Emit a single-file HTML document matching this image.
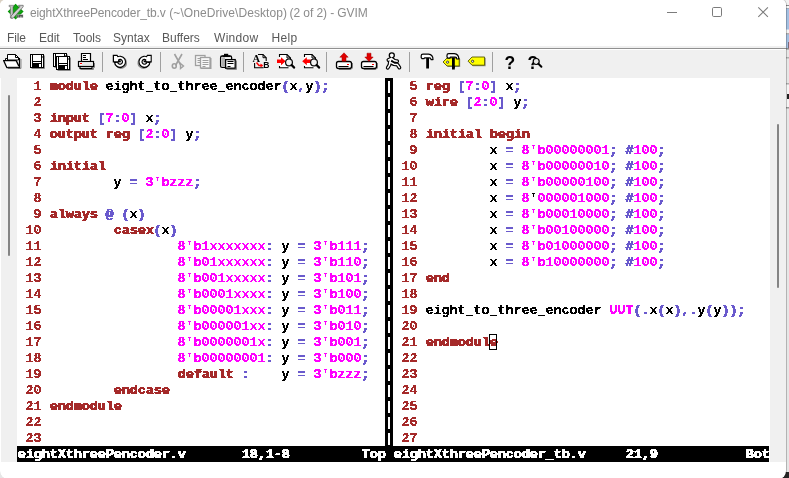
<!DOCTYPE html>
<html><head><meta charset="utf-8"><title>GVIM</title>
<style>
html,body{margin:0;padding:0;}
body{width:789px;height:478px;overflow:hidden;background:#e6e6e6;position:relative;font-family:"Liberation Sans",sans-serif;}
#bgright{position:absolute;left:786px;top:0;width:3px;height:478px;background:linear-gradient(to bottom,#f2f2f2 0,#f2f2f2 5px,#8c8c8c 5px,#8c8c8c 6px,#f6f6f6 6px,#f6f6f6 8px,#9a9a9a 8px,#a4c0e2 9px,#a4c0e2 29px,#f4f4f4 30px,#f4f4f4 33px,#b0b0b0 33px,#b0b0b0 34px,#a4c0e2 35px,#a4c0e2 48px,#8a8a8a 48px,#8a8a8a 49px,#e6e6e6 50px,#e6e6e6 57px,#b0b0b0 57px,#b0b0b0 58px,#e6e6e6 59px,#e6e6e6 83px,#b0b0b0 83px,#b0b0b0 84px,#f4f4f4 85px,#f4f4f4 107px,#999 107px,#999 108px,#e6e6e6 109px,#e6e6e6 472px,#262626 472px);}
#bgtl{position:absolute;left:0;top:0;width:6px;height:6px;background:#d9d0c2;}
#bgbl{position:absolute;left:0;top:466px;width:10px;height:12px;background:#e6e6e6;}
#bgbr{position:absolute;left:774px;top:472px;width:15px;height:6px;background:#262626;}
#glyph1{position:absolute;left:788px;top:42px;width:1px;height:6px;background:#7a6a7a;}
#glyph2{position:absolute;left:787px;top:94px;width:2px;height:5px;background:#222;}
#win{will-change:transform;position:absolute;left:0;top:0;width:786px;height:479px;background:#fff;border-right:1px solid rgba(0,0,0,0.22);background-clip:padding-box;border-radius:5px 5px 8px 8px;overflow:hidden;}
#title{position:absolute;left:0;top:0;width:786px;height:30px;background:#fff;}
#vimicon{position:absolute;left:7px;top:3px;}
.tt{position:absolute;top:5px;font-size:12px;color:#8c8c8c;white-space:pre;line-height:16px;}
#wctl{position:absolute;left:650px;top:0;}
#menu{position:absolute;left:0;top:28px;width:786px;height:18px;background:#fff;}
#menu span{position:absolute;top:2px;font-size:12px;color:#585858;line-height:16px;}
#tbline{position:absolute;left:0;top:48px;width:786px;height:1px;background:#909090;z-index:2;box-shadow:0 1px 0 #fff;}
#toolbar{position:absolute;left:0;top:46px;width:786px;height:32px;background:#f0f0f0;}
#lsb{position:absolute;left:1px;top:78px;width:16px;height:384px;background:#f0f0f0;}
#rsb{position:absolute;left:770px;top:78px;width:16px;height:384px;background:#f0f0f0;}
#lthumb{position:absolute;left:8px;top:95px;width:2px;height:161px;background:#858585;border-radius:1px;}
#rthumb{position:absolute;left:777px;top:124px;width:2px;height:164px;background:#858585;border-radius:1px;}
#text{position:absolute;left:17px;top:78px;width:753px;height:384px;background:#fff;font-family:"Liberation Mono",monospace;font-weight:bold;font-size:13.333px;line-height:16px;color:#000;}
.pane{position:absolute;top:0;}
#lp{left:0;width:368px;height:368px;overflow:hidden;}
#rp{left:376px;width:376px;height:368px;overflow:hidden;}
#sep{position:absolute;left:368px;top:0;width:8px;height:368px;background:#000;color:#fff;overflow:hidden;}
.ln{filter:url(#crisp);height:16px;white-space:pre;position:relative;top:1px;left:0.5px;}
#sep .ln{left:0;}
.l{color:#a52a2a}.k{color:#a52a2a;text-shadow:0.8px 0 0 #a52a2a}.n{color:#ff00ff}.q{color:#6a5acd}.s{color:#6a5acd;-webkit-text-stroke:0.35px #6a5acd}.t{color:#000}
#status{position:absolute;left:0;top:368px;width:752px;height:16px;background:#000;color:#fff;}
#status span{filter:url(#crisp);text-shadow:0.8px 0 0 #fff;position:absolute;top:1px;white-space:pre;margin-left:0.5px;}
#cursor{position:absolute;left:472px;top:256px;width:6px;height:14px;border:1px solid #000;box-sizing:content-box;}
.tsep{position:absolute;top:4px;width:1px;height:20px;background:#a0a0a0;}
.ic{position:absolute;top:5px;width:18px;height:18px;}

</style></head>
<body>
<svg width="0" height="0" style="position:absolute"><filter id="crisp" x="0" y="0" width="100%" height="100%" color-interpolation-filters="sRGB"><feComponentTransfer><feFuncA type="discrete" tableValues="0 1 1"/></feComponentTransfer></filter></svg>
<div id="bgright"></div><div id="bgtl"></div><div id="bgbl"></div><div id="bgbr"></div><div id="glyph1"></div><div id="glyph2"></div>
<div id="win">
 <div id="title"><svg id="vimicon" width="18" height="18" viewBox="7 3 18 18">
   <polygon points="15.6,3.8 23.6,11.6 15.6,19.4 7.7,11.6" fill="#0a960a"/>
   <polygon points="15.6,5.5 21.9,11.6 15.6,17.7 9.4,11.6" fill="#10a810"/>
   <polygon points="9,5.3 13.8,5.3 13.8,6.6 13,6.6 13,13 12.4,18 10.4,18 10.4,6.6 9,6.6" fill="#c4c4c4" stroke="#5a5a5a" stroke-width="0.5"/>
   <polygon points="18.6,5.3 23.2,5.3 23.2,6.8 13.2,18.2 11,18.2 11,16 20,6.6 18.6,6.6" fill="#cfcfcf" stroke="#4a4a4a" stroke-width="0.6"/>
   <rect x="16.6" y="14.4" width="6.6" height="3.2" fill="#a8a8a8"/>
   <rect x="17.4" y="15.2" width="1" height="2.2" fill="#333"/><rect x="19.2" y="15.2" width="3.4" height="1" fill="#444"/><rect x="19.2" y="15.2" width="0.9" height="2.2" fill="#444"/><rect x="21.7" y="15.2" width="0.9" height="2.2" fill="#444"/>
 </svg><span class="tt" style="left:30px;letter-spacing:-0.13px">eightXthreePencoder_tb.v</span><span class="tt" style="left:169.3px;letter-spacing:0.07px">(~\OneDrive\Desktop)</span><span class="tt" style="left:289.6px;letter-spacing:-0.09px">(2 of 2) - GVIM</span>
  <svg id="wctl" width="140" height="30" viewBox="650 0 140 30">
   <path d="M667 12.5h10" stroke="#7c7c7c" stroke-width="1" fill="none"/>
   <rect x="712.5" y="7.5" width="9" height="9" rx="1.2" fill="none" stroke="#7c7c7c" stroke-width="1"/>
   <path d="M758.3 7.3l9.6 9.6M767.9 7.3l-9.6 9.6" stroke="#7c7c7c" stroke-width="1.1" fill="none"/>
  </svg>
 </div>
 <div id="menu"><span style="left:7px;letter-spacing:-0.1px">File</span><span style="left:39px">Edit</span><span style="left:73px">Tools</span><span style="left:113px">Syntax</span><span style="left:162px">Buffers</span><span style="left:214px;letter-spacing:0.3px">Window</span><span style="left:271.5px;letter-spacing:0.3px">Help</span></div>
 <div id="tbline"></div>
 <div id="toolbar"><svg width="786" height="32" viewBox="0 46 786 32" style="position:absolute;left:0;top:0"><rect x="102" y="52" width="1" height="20" fill="#a0a0a0"/>
<rect x="160" y="52" width="1" height="20" fill="#a0a0a0"/>
<rect x="243" y="52" width="1" height="20" fill="#a0a0a0"/>
<rect x="326" y="52" width="1" height="20" fill="#a0a0a0"/>
<rect x="409" y="52" width="1" height="20" fill="#a0a0a0"/>
<rect x="492" y="52" width="1" height="20" fill="#a0a0a0"/>
<g>
<path d="M21 59v9.5h-13" stroke="#8a8a8a" stroke-width="1" fill="none"/>
<path d="M7.5 60V54.5h8l3 3V60z" fill="#fff" stroke="#000" stroke-width="1"/>
<path d="M15.5 54.5v3h3" fill="none" stroke="#000" stroke-width="1"/>
<path d="M5.5 60.5v-2h2" fill="none" stroke="#000" stroke-width="1"/>
<path d="M18 58.5h1.5v8.5" fill="none" stroke="#000" stroke-width="1.2"/>
<path d="M3.6 60.6h12.6l3.4 7h-12.8z" fill="#fff" stroke="#000" stroke-width="1.3" stroke-linejoin="round"/>
<path d="M7.5 66.6h11" stroke="#c8c8c8" stroke-width="1"/>
</g>
<g transform="translate(30,54)">
<path d="M14.5 1.5v13h-13" stroke="#8a8a8a" stroke-width="1" fill="none"/>
<rect x="0" y="0" width="14" height="14" fill="#000"/>
<rect x="1" y="1" width="12" height="12" fill="#fff"/>
<rect x="2" y="1" width="1" height="12" fill="#000"/>
<rect x="11" y="1" width="1" height="12" fill="#000"/>
<rect x="2" y="7" width="10" height="1" fill="#000"/>
<rect x="3" y="9" width="6" height="4" fill="#000"/>
<rect x="9" y="9" width="2" height="1" fill="#000"/>
<rect x="12" y="2.5" width="1" height="1" fill="#000"/>
</g>
<g transform="translate(53,53)">
<path d="M14.5 1.5v13h-13" stroke="#8a8a8a" stroke-width="1" fill="none"/>
<rect x="0" y="0" width="14" height="14" fill="#000"/>
<rect x="1" y="1" width="12" height="12" fill="#fff"/>
<rect x="2" y="1" width="1" height="12" fill="#000"/>
<rect x="11" y="1" width="1" height="12" fill="#000"/>
<rect x="2" y="7" width="10" height="1" fill="#000"/>
<rect x="3" y="9" width="6" height="4" fill="#000"/>
<rect x="9" y="9" width="2" height="1" fill="#000"/>
<rect x="12" y="2.5" width="1" height="1" fill="#000"/>
</g>
<g transform="translate(56,56)">
<path d="M14.5 1.5v13h-13" stroke="#8a8a8a" stroke-width="1" fill="none"/>
<rect x="0" y="0" width="14" height="14" fill="#000"/>
<rect x="1" y="1" width="12" height="12" fill="#fff"/>
<rect x="2" y="1" width="1" height="12" fill="#000"/>
<rect x="11" y="1" width="1" height="12" fill="#000"/>
<rect x="2" y="7" width="10" height="1" fill="#000"/>
<rect x="3" y="9" width="6" height="4" fill="#000"/>
<rect x="9" y="9" width="2" height="1" fill="#000"/>
<rect x="12" y="2.5" width="1" height="1" fill="#000"/>
</g>
<g>
<path d="M94.5 63v4.5h-1v2h-13" stroke="#8a8a8a" fill="none"/>
<path d="M81.5 61.5v-8h9v8" fill="#fff" stroke="#000" stroke-width="1.2"/>
<path d="M83 55.5h3M83 57.5h3M83 59.5h5" stroke="#000" stroke-width="1"/>
<rect x="78.5" y="61.5" width="15" height="5" fill="#fff" stroke="#000" stroke-width="1.2"/>
<rect x="80" y="66.5" width="12" height="2" fill="#fff" stroke="#000" stroke-width="1.2"/>
<rect x="80" y="63" width="2" height="1" fill="#f00"/>
<rect x="82" y="63.2" width="10.5" height="2" fill="#e6e6e6"/>
</g>
<g><path d="M120.00 57.80 A4 4 0 1 1 116.54 63.80" fill="none" stroke="#8a8a8a" stroke-width="4" transform="translate(1,1)"/>
<path d="M117.17 58.97 A4 4 0 1 1 116.00 61.94" fill="none" stroke="#000" stroke-width="4.2"/>
<path d="M113.4 55.3h3.6l1.6 2.6v4h-5.2z" fill="#fff" stroke="#000" stroke-width="1.3" stroke-linejoin="miter"/>
<path d="M117.54 58.65 A4 4 0 1 1 116.20 63.04" fill="none" stroke="#fff" stroke-width="1.9"/>
<path d="M114.1 56h2.6l1.4 2.2v2.8h-4z" fill="#fff"/><rect x="118.6" y="60.4" width="2.2" height="1.8" fill="#000"/></g>
<g transform="translate(264.5,0) scale(-1,1)"><path d="M120.00 57.80 A4 4 0 1 1 116.54 63.80" fill="none" stroke="#8a8a8a" stroke-width="4" transform="translate(1,1)"/>
<path d="M117.17 58.97 A4 4 0 1 1 116.00 61.94" fill="none" stroke="#000" stroke-width="4.2"/>
<path d="M113.4 55.3h3.6l1.6 2.6v4h-5.2z" fill="#fff" stroke="#000" stroke-width="1.3" stroke-linejoin="miter"/>
<path d="M117.54 58.65 A4 4 0 1 1 116.20 63.04" fill="none" stroke="#fff" stroke-width="1.9"/>
<path d="M114.1 56h2.6l1.4 2.2v2.8h-4z" fill="#fff"/><rect x="118.6" y="60.4" width="2.2" height="1.8" fill="#000"/></g>
<g fill="none" stroke="#a0a0a0">
<path d="M174.5 54l6.5 11.5M182 54l-6.5 11.5" stroke-width="1.6"/>
<ellipse cx="174.3" cy="66" rx="2" ry="2.2" stroke-width="1.6"/>
<path d="M180.5 63.5l3 2.5l-3 2.5z" stroke-width="1.4" fill="#f0f0f0"/>
</g>
<g>
<rect x="195.5" y="55.5" width="9.5" height="10" fill="#f4f4f4" stroke="#a0a0a0" stroke-width="1.3"/>
<path d="M197.5 58.5h5M197.5 60.5h2.5M197.5 62.5h2.5" stroke="#a0a0a0"/>
<rect x="206" y="58" width="5.5" height="11" fill="#a0a0a0"/>
<rect x="201" y="63" width="10" height="6" fill="#a0a0a0"/>
<rect x="200.5" y="57.5" width="9.5" height="10.5" fill="#f8f8f8" stroke="#a0a0a0" stroke-width="1.3"/>
<path d="M202.5 60.5h6M202.5 62.5h6M202.5 64.5h6M202.5 66.5h3" stroke="#a0a0a0"/>
</g>
<g>
<path d="M236.5 60.5v9h-10" stroke="#8a8a8a" fill="none"/>
<rect x="220.6" y="56" width="11" height="11.4" rx="1.5" fill="#fff" stroke="#000" stroke-width="1.3"/>
<rect x="222" y="57.5" width="3" height="8.5" fill="#b0b0b0"/>
<rect x="224" y="53.8" width="4.2" height="2.6" fill="#000"/>
<rect x="222.5" y="55.5" width="7.5" height="1.6" fill="#000"/>
<rect x="225.6" y="59.6" width="9.6" height="8.6" fill="#fff" stroke="#000" stroke-width="1.3"/>
<path d="M227.5 61.5h6M227.5 63.5h6M227.5 66.5h3" stroke="#000"/>
</g>
<g>
<path d="M258 54.5h5l3.2 3.2V61M254.6 63v4.7h9" fill="none" stroke="#000" stroke-width="1.1"/>
<path d="M263 54.5v3.2h3.2" fill="none" stroke="#000" stroke-width="1"/>
<text x="252.6" y="62" font-family="Liberation Serif" font-weight="bold" font-size="10.5" fill="#000">A</text>
<text x="263.2" y="68.3" font-family="Liberation Sans" font-weight="bold" font-size="8.6" fill="#000">B</text>
<path d="M256.5 62.5l2.5 3h3.5" fill="none" stroke="#f00" stroke-width="1.4"/>
<path d="M260.5 63.5l2.5 2l-2.5 2z" fill="#f00"/>
</g>
<g>
<path d="M279.5 54.5h7.5l3.5 3.5v9.7h-11" fill="#fff" stroke="none"/>
<path d="M279.5 57V54.5h7.5l3.5 3.5v3M279.5 66v1.7h9" fill="none" stroke="#000" stroke-width="1.1"/>
<path d="M287 54.5v3.5h3.5" fill="none" stroke="#000" stroke-width="1"/>
<path d="M277 59.5h4v-2.2l4.6 4l-4.6 4v-2.2h-4z" fill="#f00"/>
<path d="M291.6 65.2l2.5 2.5" stroke="#8a8a8a" stroke-width="2" transform="translate(0.6,0.6)"/>
<circle cx="289" cy="62.4" r="3.4" fill="#f2f2f2" fill-opacity="0.9" stroke="#000" stroke-width="1.2"/>
<path d="M291.6 65l2.5 2.5" stroke="#000" stroke-width="2.2" stroke-linecap="round"/>
</g>
<g>
<path d="M304.5 54.5h7.5l3.5 3.5v9.7h-11" fill="#fff" stroke="none"/>
<path d="M304.5 57V54.5h7.5l3.5 3.5v3M304.5 66v1.7h9" fill="none" stroke="#000" stroke-width="1.1"/>
<path d="M312 54.5v3.5h3.5" fill="none" stroke="#000" stroke-width="1"/>
<path d="M310.8 59.5h-4v-2.2l-4.6 4l4.6 4v-2.2h4z" fill="#f00"/>
<path d="M316.6 65.2l2.5 2.5" stroke="#8a8a8a" stroke-width="2" transform="translate(0.6,0.6)"/>
<circle cx="314" cy="62.4" r="3.4" fill="#f2f2f2" fill-opacity="0.9" stroke="#000" stroke-width="1.2"/>
<path d="M316.6 65l2.5 2.5" stroke="#000" stroke-width="2.2" stroke-linecap="round"/>
</g>
<g><path d="M352.5 63v5l-1.5 1.5h-12" stroke="#8a8a8a" fill="none"/>
<rect x="336.5" y="61.5" width="15" height="7" rx="2" fill="#fff" stroke="#000" stroke-width="1.3"/>
<path d="M338.5 66.5h10" stroke="#000" stroke-width="1"/>
<rect x="347" y="64" width="2" height="1" fill="#f00"/><path d="M344 52.8l4.2 4.4h-2.2v4h-4v-4h-2.2z" fill="#e00000" stroke="#a00000" stroke-width="0.5"/></g>
<g><path d="M377.5 63v5l-1.5 1.5h-12" stroke="#8a8a8a" fill="none"/>
<rect x="361.5" y="61.5" width="15" height="7" rx="2" fill="#fff" stroke="#000" stroke-width="1.3"/>
<path d="M363.5 66.5h10" stroke="#000" stroke-width="1"/>
<rect x="372" y="64" width="2" height="1" fill="#f00"/><path d="M369 61.4l4.2-4.4h-2.2v-3.8h-4v3.8h-2.2z" fill="#e00000" stroke="#a00000" stroke-width="0.5"/></g>
<g fill="none" stroke-linecap="round" stroke-linejoin="round">
<path d="M391.5 58.2l-1.6 3.6M391 58.8l-2.6 1.2M391.6 58.6l3 2.2l2.6 0.4M389.9 61.8l-0.4 3l-1.8 3M390 62.2l4 2l3.4 0.4l2 3" stroke="#000" stroke-width="3.8"/>
<circle cx="391.8" cy="55.3" r="2.5" fill="#fff" stroke="#000" stroke-width="1.3"/>
<path d="M391.5 58.2l-1.6 3.6M391 58.8l-2.6 1.2M391.6 58.6l3 2.2l2.6 0.4M389.9 61.8l-0.4 3l-1.8 3M390 62.2l4 2l3.4 0.4l2 3" stroke="#fff" stroke-width="1.5"/>
</g>
<g transform="translate(0,0)">
<rect x="426.2" y="58" width="2.8" height="10.5" fill="#000"/>
<path d="M421.2 57.6V55.8Q421.2 54.2 423 54.2H428.5Q433 54.6 433 59.6H431Q431 57.8 429.4 57.8H424.6L424 58.7H422Z" fill="#fff" stroke="#000" stroke-width="1.2" stroke-linejoin="round"/>
</g>
<g><path d="M447 58h12.2v8h-12.2l-4-4.0z" fill="#8a8a8a" transform="translate(1,1)"/>
<path d="M447 58h12.2v8h-12.2l-4-4.0z" fill="#ff0" stroke="#555500" stroke-width="0.9" stroke-linejoin="round"/>
<circle cx="447.6" cy="62.2" r="1.1" fill="#fff" stroke="#223" stroke-width="0.9"/><g transform="translate(25.8,-0.6)">
<rect x="426.2" y="58" width="2.8" height="10.5" fill="#000"/>
<path d="M421.2 57.6V55.8Q421.2 54.2 423 54.2H428.5Q433 54.6 433 59.6H431Q431 57.8 429.4 57.8H424.6L424 58.7H422Z" fill="#fff" stroke="#000" stroke-width="1.2" stroke-linejoin="round"/>
</g><rect x="452" y="66" width="2.8" height="3.5" fill="#000"/></g>
<g><path d="M472 57h12.600000000000001v8.2h-12.600000000000001l-4-4.1z" fill="#8a8a8a" transform="translate(1,1)"/>
<path d="M472 57h12.600000000000001v8.2h-12.600000000000001l-4-4.1z" fill="#ff0" stroke="#555500" stroke-width="0.9" stroke-linejoin="round"/>
<circle cx="472.6" cy="61.300000000000004" r="1.1" fill="#fff" stroke="#223" stroke-width="0.9"/></g>
<text x="504.6" y="68.5" font-family="Liberation Sans" font-weight="bold" font-size="17.5" fill="#000">?</text>
<g><text x="527.4" y="68.5" font-family="Liberation Sans" font-weight="bold" font-size="17.5" fill="#000">?</text>
<circle cx="536.2" cy="61.5" r="3" fill="#e8e8e8" stroke="#000" stroke-width="1.2"/>
<path d="M538.4 63.8l3 2.9" stroke="#000" stroke-width="2" stroke-linecap="round"/></g></svg></div>
 <div id="lsb"></div><div id="lthumb"></div>
 <div id="rsb"></div><div id="rthumb"></div>
 <div id="text">
  <div id="lp" class="pane">
<div class="ln"><span class="l">&nbsp;&nbsp;1 </span><span class="k">module</span> <span class="t">eight_to_three_encoder</span><span class="s">(</span><span class="t">x</span><span class="s">,</span><span class="t">y</span><span class="s">)</span><span class="s">;</span></div>
<div class="ln"><span class="l">&nbsp;&nbsp;2 </span></div>
<div class="ln"><span class="l">&nbsp;&nbsp;3 </span><span class="k">input</span> <span class="s">[</span><span class="n">7</span><span class="s">:</span><span class="n">0</span><span class="s">]</span> <span class="t">x</span><span class="s">;</span></div>
<div class="ln"><span class="l">&nbsp;&nbsp;4 </span><span class="k">output</span> <span class="k">reg</span> <span class="s">[</span><span class="n">2</span><span class="s">:</span><span class="n">0</span><span class="s">]</span> <span class="t">y</span><span class="s">;</span></div>
<div class="ln"><span class="l">&nbsp;&nbsp;5 </span></div>
<div class="ln"><span class="l">&nbsp;&nbsp;6 </span><span class="k">initial</span></div>
<div class="ln"><span class="l">&nbsp;&nbsp;7 </span>        <span class="t">y</span> <span class="q">=</span> <span class="n">3'bzzz</span><span class="s">;</span></div>
<div class="ln"><span class="l">&nbsp;&nbsp;8 </span></div>
<div class="ln"><span class="l">&nbsp;&nbsp;9 </span><span class="k">always</span> <span class="s">@</span> <span class="s">(</span><span class="t">x</span><span class="s">)</span></div>
<div class="ln"><span class="l"> 10 </span>        <span class="k">casex</span><span class="s">(</span><span class="t">x</span><span class="s">)</span></div>
<div class="ln"><span class="l"> 11 </span>                <span class="n">8'b1xxxxxxx</span><span class="s">:</span> <span class="t">y</span> <span class="q">=</span> <span class="n">3'b111</span><span class="s">;</span></div>
<div class="ln"><span class="l"> 12 </span>                <span class="n">8'b01xxxxxx</span><span class="s">:</span> <span class="t">y</span> <span class="q">=</span> <span class="n">3'b110</span><span class="s">;</span></div>
<div class="ln"><span class="l"> 13 </span>                <span class="n">8'b001xxxxx</span><span class="s">:</span> <span class="t">y</span> <span class="q">=</span> <span class="n">3'b101</span><span class="s">;</span></div>
<div class="ln"><span class="l"> 14 </span>                <span class="n">8'b0001xxxx</span><span class="s">:</span> <span class="t">y</span> <span class="q">=</span> <span class="n">3'b100</span><span class="s">;</span></div>
<div class="ln"><span class="l"> 15 </span>                <span class="n">8'b00001xxx</span><span class="s">:</span> <span class="t">y</span> <span class="q">=</span> <span class="n">3'b011</span><span class="s">;</span></div>
<div class="ln"><span class="l"> 16 </span>                <span class="n">8'b000001xx</span><span class="s">:</span> <span class="t">y</span> <span class="q">=</span> <span class="n">3'b010</span><span class="s">;</span></div>
<div class="ln"><span class="l"> 17 </span>                <span class="n">8'b0000001x</span><span class="s">:</span> <span class="t">y</span> <span class="q">=</span> <span class="n">3'b001</span><span class="s">;</span></div>
<div class="ln"><span class="l"> 18 </span>                <span class="n">8'b00000001</span><span class="s">:</span> <span class="t">y</span> <span class="q">=</span> <span class="n">3'b000</span><span class="s">;</span></div>
<div class="ln"><span class="l"> 19 </span>                <span class="k">default</span> <span class="s">:</span>    <span class="t">y</span> <span class="q">=</span> <span class="n">3'bzzz</span><span class="s">;</span></div>
<div class="ln"><span class="l"> 20 </span>        <span class="k">endcase</span></div>
<div class="ln"><span class="l"> 21 </span><span class="k">endmodule</span></div>
<div class="ln"><span class="l"> 22 </span></div>
<div class="ln"><span class="l"> 23 </span></div>
  </div>
  <div id="sep"><div class="ln">|</div><div class="ln">|</div><div class="ln">|</div><div class="ln">|</div><div class="ln">|</div><div class="ln">|</div><div class="ln">|</div><div class="ln">|</div><div class="ln">|</div><div class="ln">|</div><div class="ln">|</div><div class="ln">|</div><div class="ln">|</div><div class="ln">|</div><div class="ln">|</div><div class="ln">|</div><div class="ln">|</div><div class="ln">|</div><div class="ln">|</div><div class="ln">|</div><div class="ln">|</div><div class="ln">|</div><div class="ln">|</div></div>
  <div id="rp" class="pane">
<div class="ln"><span class="l">&nbsp;&nbsp;5 </span><span class="k">reg</span> <span class="s">[</span><span class="n">7</span><span class="s">:</span><span class="n">0</span><span class="s">]</span> <span class="t">x</span><span class="s">;</span></div>
<div class="ln"><span class="l">&nbsp;&nbsp;6 </span><span class="k">wire</span> <span class="s">[</span><span class="n">2</span><span class="s">:</span><span class="n">0</span><span class="s">]</span> <span class="t">y</span><span class="s">;</span></div>
<div class="ln"><span class="l">&nbsp;&nbsp;7 </span></div>
<div class="ln"><span class="l">&nbsp;&nbsp;8 </span><span class="k">initial</span> <span class="k">begin</span></div>
<div class="ln"><span class="l">&nbsp;&nbsp;9 </span>        <span class="t">x</span> <span class="q">=</span> <span class="n">8'b00000001</span><span class="s">;</span> <span class="s">#</span><span class="n">100</span><span class="s">;</span></div>
<div class="ln"><span class="l"> 10 </span>        <span class="t">x</span> <span class="q">=</span> <span class="n">8'b00000010</span><span class="s">;</span> <span class="s">#</span><span class="n">100</span><span class="s">;</span></div>
<div class="ln"><span class="l"> 11 </span>        <span class="t">x</span> <span class="q">=</span> <span class="n">8'b00000100</span><span class="s">;</span> <span class="s">#</span><span class="n">100</span><span class="s">;</span></div>
<div class="ln"><span class="l"> 12 </span>        <span class="t">x</span> <span class="q">=</span> <span class="n">8</span><span class="t">'</span><span class="n">000001000</span><span class="s">;</span> <span class="s">#</span><span class="n">100</span><span class="s">;</span></div>
<div class="ln"><span class="l"> 13 </span>        <span class="t">x</span> <span class="q">=</span> <span class="n">8'b00010000</span><span class="s">;</span> <span class="s">#</span><span class="n">100</span><span class="s">;</span></div>
<div class="ln"><span class="l"> 14 </span>        <span class="t">x</span> <span class="q">=</span> <span class="n">8'b00100000</span><span class="s">;</span> <span class="s">#</span><span class="n">100</span><span class="s">;</span></div>
<div class="ln"><span class="l"> 15 </span>        <span class="t">x</span> <span class="q">=</span> <span class="n">8'b01000000</span><span class="s">;</span> <span class="s">#</span><span class="n">100</span><span class="s">;</span></div>
<div class="ln"><span class="l"> 16 </span>        <span class="t">x</span> <span class="q">=</span> <span class="n">8'b10000000</span><span class="s">;</span> <span class="s">#</span><span class="n">100</span><span class="s">;</span></div>
<div class="ln"><span class="l"> 17 </span><span class="k">end</span></div>
<div class="ln"><span class="l"> 18 </span></div>
<div class="ln"><span class="l"> 19 </span><span class="t">eight_to_three_encoder</span> <span class="n">UUT</span><span class="s">(</span><span class="s">.</span><span class="t">x</span><span class="s">(</span><span class="t">x</span><span class="s">)</span><span class="s">,</span><span class="s">.</span><span class="t">y</span><span class="s">(</span><span class="t">y</span><span class="s">)</span><span class="s">)</span><span class="s">;</span></div>
<div class="ln"><span class="l"> 20 </span></div>
<div class="ln"><span class="l"> 21 </span><span class="k">endmodule</span></div>
<div class="ln"><span class="l"> 22 </span></div>
<div class="ln"><span class="l"> 23 </span></div>
<div class="ln"><span class="l"> 24 </span></div>
<div class="ln"><span class="l"> 25 </span></div>
<div class="ln"><span class="l"> 26 </span></div>
<div class="ln"><span class="l"> 27 </span></div>
  </div>
  <div id="cursor"></div>
  <div id="status"><span style="left:0">eightXthreePencoder.v</span><span style="left:224px">18,1-8</span><span style="left:344px">Top</span><span style="left:376px">eightXthreePencoder_tb.v</span><span style="left:608px">21,9</span><span style="left:728px">Bot</span></div>
 </div>
</div>
</body></html>
